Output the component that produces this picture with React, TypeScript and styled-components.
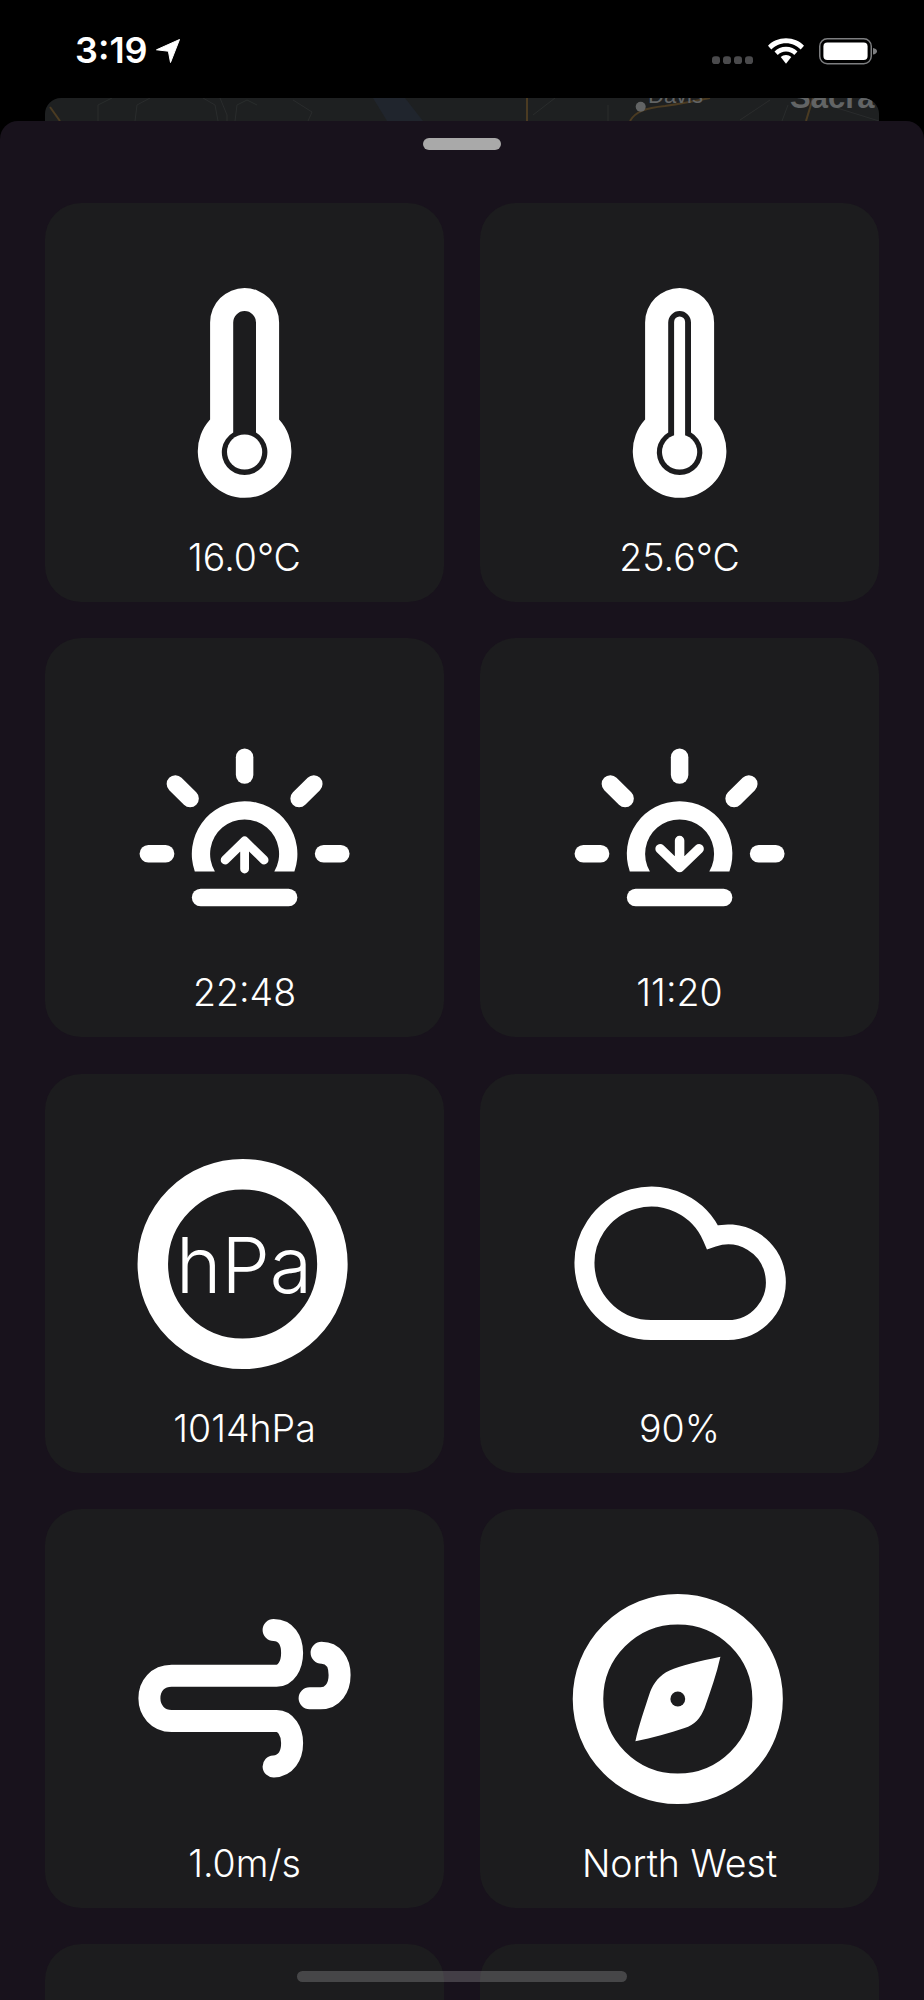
import React from "react";
import styled, { createGlobalStyle } from "styled-components";

const Global = createGlobalStyle`
  html, body { margin: 0; padding: 0; background: #000; }
  body { font-family: Inter, "Liberation Sans", sans-serif; }
  #root { width: 924px; height: 2000px; overflow: hidden; }
`;

const Page = styled.div`
  position: relative;
  width: 924px;
  height: 2000px;
  overflow: hidden;
  background: #000;
  display: flex;
  flex-direction: column;
`;

const StatusBar = styled.header`
  height: 98px;
  flex: none;
  display: flex;
  justify-content: space-between;
  align-items: flex-start;
  padding: 32px 47px 0 75px;
  box-sizing: border-box;
  color: #fff;
`;

const TimeGroup = styled.div`
  display: flex;
  align-items: center;
  gap: 9px;
`;

const Time = styled.span`
  font-family: Inter, sans-serif;
  font-size: 36px;
  font-weight: 600;
  line-height: 37px;
  width: 72px;
  white-space: nowrap;
`;

const StatusIcons = styled.div`
  display: flex;
  align-items: flex-start;
  gap: 15px;
  padding-top: 5.5px;
`;

const MapPeek = styled.div`
  flex: none;
  height: 23px;
  margin: 0 45px;
  border-radius: 16px 16px 0 0;
  background: #1e2021;
  overflow: hidden;
`;

const Sheet = styled.main`
  flex: 1;
  background: #18121c;
  border-radius: 18px 18px 0 0;
  overflow: hidden;
  padding: 17px 45px 0;
  display: flex;
  flex-direction: column;
  align-items: center;
`;

const Handle = styled.div`
  width: 78px;
  height: 12px;
  border-radius: 6px;
  background: #a9a9a9;
  flex: none;
`;

const Grid = styled.div`
  margin-top: 53px;
  width: 834px;
  display: grid;
  grid-template-columns: 399px 399px;
  grid-auto-rows: 399px;
  column-gap: 36px;
  row-gap: 36.25px;
  flex: none;
`;

const Card = styled.section`
  background: #1c1c1e;
  border-radius: 36px;
  display: flex;
  flex-direction: column;
  align-items: center;
  padding-top: 85px;
  box-sizing: border-box;
`;

const IconBox = styled.svg.attrs({ viewBox: "0.4 0 210 210" })`
  width: 210px;
  height: 210px;
  flex: none;
  display: block;
  overflow: visible;
`;

const Label = styled.div`
  margin-top: 38px;
  color: #fff;
  font-family: Inter, sans-serif;
  font-size: 37.5px;
  font-weight: 300;
  line-height: 44px;
  text-align: center;
`;

const HomeBar = styled.div`
  position: absolute;
  left: 297px;
  top: 1971px;
  width: 330px;
  height: 11px;
  border-radius: 6px;
  background: rgba(255, 255, 255, 0.19);
`;

const Ink = "#fff";
const Dark = "#1c1c1e";

const Thermo: React.FC<{ full?: boolean }> = ({ full }) => (
  <IconBox>
    <path
      fill={Ink}
      d="M70.5 34.5A34.5 34.5 0 0 1 139.5 34.5V131.4A46.8 46.8 0 1 1 70.5 131.4Z"
    />
    <path
      fill={Dark}
      d="M93.6 34.5A11.4 11.4 0 0 1 116.4 34.5V144.5A22.8 22.8 0 1 1 93.6 144.5Z"
    />
    <circle cx="105" cy="164" r="17.6" fill={Ink} />
    {full && <path fill={Ink} d="M99.5 34A5.5 5.5 0 0 1 110.5 34V150H99.5Z" />}
  </IconBox>
);

const Sun: React.FC<{ down?: boolean }> = ({ down }) => (
  <IconBox>
    <g stroke={Ink} strokeWidth="17.5" strokeLinecap="round" fill="none">
      <path d="M105 34.2V52" />
      <path d="M8.75 130.7H26" />
      <path d="M184 130.7H201.2" />
      <path d="M35.8 61L50.5 75.5" />
      <path d="M174.2 61L159.5 75.5" />
      <path d="M61 174.5H149" />
    </g>
    <path
      fill={Ink}
      d="M55.2 148.5A52.8 52.8 0 1 1 154.8 148.5H134.7A34.5 34.5 0 1 0 75.3 148.5Z"
    />
    {down ? (
      <path
        d="M85.5 125.8L105 144.5L124.5 125.8M105 117.5V142"
        stroke={Ink}
        strokeWidth="9.5"
        strokeLinecap="round"
        strokeLinejoin="round"
        fill="none"
      />
    ) : (
      <path
        d="M85.5 137L105 118L124.5 137M105 120V146"
        stroke={Ink}
        strokeWidth="8.8"
        strokeLinecap="round"
        strokeLinejoin="round"
        fill="none"
      />
    )}
  </IconBox>
);

const HpaText = styled.text`
  fill: #fff;
  font-family: Inter, sans-serif;
  font-size: 77px;
  font-weight: 300;
  text-anchor: middle;
`;

const Pressure = () => (
  <IconBox>
    <circle cx="103" cy="105" r="89.8" fill="none" stroke={Ink} strokeWidth="30.5" />
    <HpaText x="104.5" y="134">hPa</HpaText>
  </IconBox>
);

const Cloud = () => (
  <IconBox>
    <path
      d="M76.4 171A66.7 66.7 0 1 1 137.9 78A47.8 47.8 0 1 1 153.4 171Z"
      fill="none"
      stroke={Ink}
      strokeWidth="20"
      strokeLinejoin="miter"
    />
  </IconBox>
);

const Wind = () => (
  <IconBox>
    <path
      d="M134 36C146 36 152.5 46 152.5 59C152.5 72 146 81.7 137 81.7H32C18 81.7 9.8 92 9.8 104.3C9.8 116 18 127 32 127H137C146 127 152.5 137 152.5 149C152.5 162 146 172 134 172.5"
      fill="none"
      stroke={Ink}
      strokeWidth="22"
      strokeLinecap="round"
    />
    <path
      d="M170 104.3H181C193 104.3 200 94 200 81C200 68 193 58.7 182 58.7"
      fill="none"
      stroke={Ink}
      strokeWidth="22"
      strokeLinecap="round"
    />
  </IconBox>
);

const Compass = () => (
  <IconBox>
    <circle cx="103.2" cy="105" r="89.8" fill="none" stroke={Ink} strokeWidth="30.5" />
    <path
      fill={Ink}
      d="M145.8 62.7C125 67 105 72 95 76.5C85 81 79 89 75.5 98C70 115 64 132 60.8 147.3C78 144 95 139 110 134C120 131 126 124 130 114C136 97 142 80 145.8 62.7Z"
    />
    <circle cx="103.2" cy="105" r="7.4" fill={Dark} />
  </IconBox>
);

const items: { icon: React.ReactNode; label: string }[] = [
  { icon: <Thermo />, label: "16.0°C" },
  { icon: <Thermo full />, label: "25.6°C" },
  { icon: <Sun />, label: "22:48" },
  { icon: <Sun down />, label: "11:20" },
  { icon: <Pressure />, label: "1014hPa" },
  { icon: <Cloud />, label: "90%" },
  { icon: <Wind />, label: "1.0m/s" },
  { icon: <Compass />, label: "North West" },
  { icon: null, label: "" },
  { icon: null, label: "" },
];

const MapText = styled.text<{ $size: number; $weight: number }>`
  fill: #626465;
  font-family: "Liberation Sans", sans-serif;
  font-weight: ${(p) => p.$weight};
  font-size: ${(p) => p.$size}px;
`;

export default function App() {
  return (
    <Page>
      <Global />
      <StatusBar>
        <TimeGroup>
          <Time>3:19</Time>
          <svg width="24" height="24" viewBox="0 0 24 24">
            <path fill="#fff" stroke="#fff" strokeWidth="1" strokeLinejoin="round" d="M23.5 0.5L14.5 23.5L12.4 12.2L0.5 10.8Z" />
          </svg>
        </TimeGroup>
        <StatusIcons>
          <svg width="41" height="26" viewBox="0 0 41 26">
            <g fill="#4a4a4c">
              <rect x="0" y="18.2" width="8" height="8" rx="3" />
              <rect x="11" y="18.2" width="8" height="8" rx="3" />
              <rect x="22" y="18.2" width="8" height="8" rx="3" />
              <rect x="33" y="18.2" width="8" height="8" rx="3" />
            </g>
          </svg>
          <svg width="36" height="26" viewBox="0 0 37 26">
            <path fill="#fff" d="M18.5 0C26 0 32.5 3 37 7.6L33.6 11.4C30 7.6 24.6 5 18.5 5C12.4 5 7 7.6 3.4 11.4L0 7.6C4.5 3 11 0 18.5 0Z" />
            <path fill="#fff" d="M18.5 8.6C23.2 8.6 27.4 10.5 30.3 13.4L27 17C24.9 14.8 21.9 13.4 18.5 13.4C15.1 13.4 12.1 14.8 10 17L6.7 13.4C9.6 10.5 13.8 8.6 18.5 8.6Z" />
            <path fill="#fff" d="M18.5 17C20.6 17 22.5 17.9 23.9 19.2L18.5 26L13.1 19.2C14.5 17.9 16.4 17 18.5 17Z" />
          </svg>
          <svg width="58" height="27" viewBox="0 0 58 27">
            <rect x="0.75" y="0.75" width="51.5" height="25" rx="7.5" fill="none" stroke="#7d7e80" strokeWidth="1.5" />
            <rect x="4.4" y="4.4" width="44.2" height="17.7" rx="4" fill="#fff" />
            <path fill="#7d7e80" d="M54 10C56 10.4 58 11.5 58 13.2C58 15 56 16.2 54 16.6Z" />
          </svg>
        </StatusIcons>
      </StatusBar>
      <MapPeek>
        <svg width="834" height="23" viewBox="0 0 834 23">
          <path fill="#20252d" d="M328 0H360L378 23H342Z" />
          <g fill="none" stroke="#2a2c2d" strokeWidth="1">
            <path d="M53 23V7L67 0" />
            <path d="M90 23L92 7L105 0" />
            <path d="M158 0L170 7L173 23" />
            <path d="M175 0L182 17V23" />
            <path d="M190 23L192 7L202 2L212 7" />
            <path d="M248 2L267 14L263 23" />
            <path d="M488 17L510 0" />
            <path d="M563 7V23" />
            <path d="M695 22L725 2" />
            <path d="M737 23L743 7" />
            <path d="M792 10L834 23" />
          </g>
          <g fill="none" stroke="#4b3b22" strokeWidth="2">
            <path d="M5 9L15 23" />
            <path d="M482 0V23" />
            <path d="M585 23C590 14 600 10 620 8C640 5 650 3 665 0" />
            <path d="M768 0L761 23" />
          </g>
          <circle cx="595.7" cy="8.7" r="5" fill="#626465" />
          <MapText $size={22} $weight={400} x="603" y="4.5">Davis</MapText>
          <MapText $size={31} $weight={700} x="745" y="10">Sacra</MapText>
        </svg>
      </MapPeek>
      <Sheet>
        <Handle />
        <Grid>
          {items.map((it, i) => (
            <Card key={i}>
              {it.icon}
              {it.label && <Label>{it.label}</Label>}
            </Card>
          ))}
        </Grid>
      </Sheet>
      <HomeBar />
    </Page>
  );
}
